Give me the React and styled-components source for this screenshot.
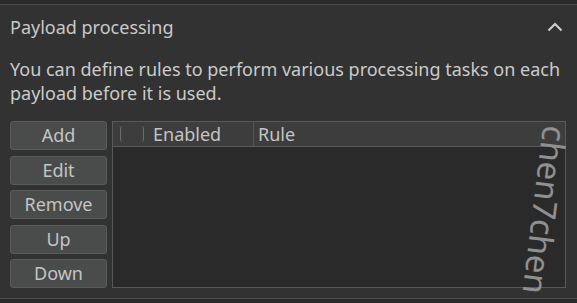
import React from 'react'
import styled, { createGlobalStyle } from 'styled-components'

const Global = createGlobalStyle`
body {
    margin: 0;
    background: #2a2a2b;
    font-family: "Noto Sans", "Open Sans", sans-serif;
}
`

const Root = styled.div`
width: 577px;
height: 303px;
padding-top: 4px;
box-sizing: border-box;
position: relative;
`

const Panel = styled.div`
height: 295px;
box-sizing: border-box;
background: #323232;
border-top: 1px solid #4a4a4a;
border-bottom: 1px solid #4e4e4e;
display: flex;
flex-direction: column;
`

const Header = styled.div`
display: flex;
align-items: center;
justify-content: space-between;
height: 44px;
padding: 0 14px 0 10px;
`

const Title = styled.div`
font-size: 18px;
color: #c9c9c9;
`

const Chevron = styled.svg`
width: 16px;
height: 10px;
`

const Desc = styled.div`
padding: 8px 16px 0 10px;
font-size: 18px;
line-height: 24px;
color: #cbcbcb;
`

const Content = styled.div`
display: flex;
gap: 5px;
padding: 16px 11px 0 10px;
`

const Buttons = styled.div`
display: flex;
flex-direction: column;
gap: 5.5px;
width: 97px;
`

const Button = styled.button`
height: 29px;
box-sizing: border-box;
background: #4a4c4c;
border: 1px solid #5a5c5c;
border-radius: 3px;
color: #c4c4c4;
font-family: "Noto Sans", "Open Sans", sans-serif;
font-size: 18px;
padding: 0;
line-height: 27px;
`

const Table = styled.div`
flex: 1;
height: 167px;
box-sizing: border-box;
border: 1px solid #595959;
background: #2a2a2a;
display: flex;
flex-direction: column;
`

const HeadRow = styled.div`
display: flex;
height: 24px;
background: #3d3d3d;
border-bottom: 1px solid #5a5a5a;
`

const HeadCell = styled.div`
display: flex;
align-items: center;
gap: 9px;
width: ${({ w }) => w || 'auto'};
flex: ${({ w }) => (w ? 'none' : 1)};
padding-left: ${({ pad }) => pad}px;
box-sizing: border-box;
border-right: ${({ sep }) => (sep ? '1px solid #555' : 'none')};
font-size: 18px;
color: #c4c4c4;
`

const Check = styled.span`
width: 22px;
height: 16px;
border-left: 1.5px solid #6c6c6c;
border-right: 1.5px solid #6c6c6c;
border-radius: 3px;
`

const Watermark = styled.div`
position: absolute;
left: 572px;
top: 128px;
transform-origin: 0 0;
transform: rotate(97deg);
font-family: "Noto Sans", sans-serif;
font-size: 33px;
line-height: 1;
color: #909090;
white-space: nowrap;
`

export default function App() {
    return (
        <Root>
            <Global />
            <Panel>
                <Header>
                    <Title>Payload processing</Title>
                    <Chevron viewBox="0 0 16 10">
                        <polyline points="1.5,8.5 8,2 14.5,8.5" fill="none" stroke="#d2d2d2" strokeWidth="2" />
                    </Chevron>
                </Header>
                <Desc>You can define rules to perform various processing tasks on each payload before it is used.</Desc>
                <Content>
                    <Buttons>
                        <Button>Add</Button>
                        <Button>Edit</Button>
                        <Button>Remove</Button>
                        <Button>Up</Button>
                        <Button>Down</Button>
                    </Buttons>
                    <Table>
                        <HeadRow>
                            <HeadCell w="141px" pad={7} sep>
                                <Check />
                                Enabled
                            </HeadCell>
                            <HeadCell pad={4}>Rule</HeadCell>
                        </HeadRow>
                    </Table>
                </Content>
            </Panel>
            <Watermark>chen7chen</Watermark>
        </Root>
    )
}
